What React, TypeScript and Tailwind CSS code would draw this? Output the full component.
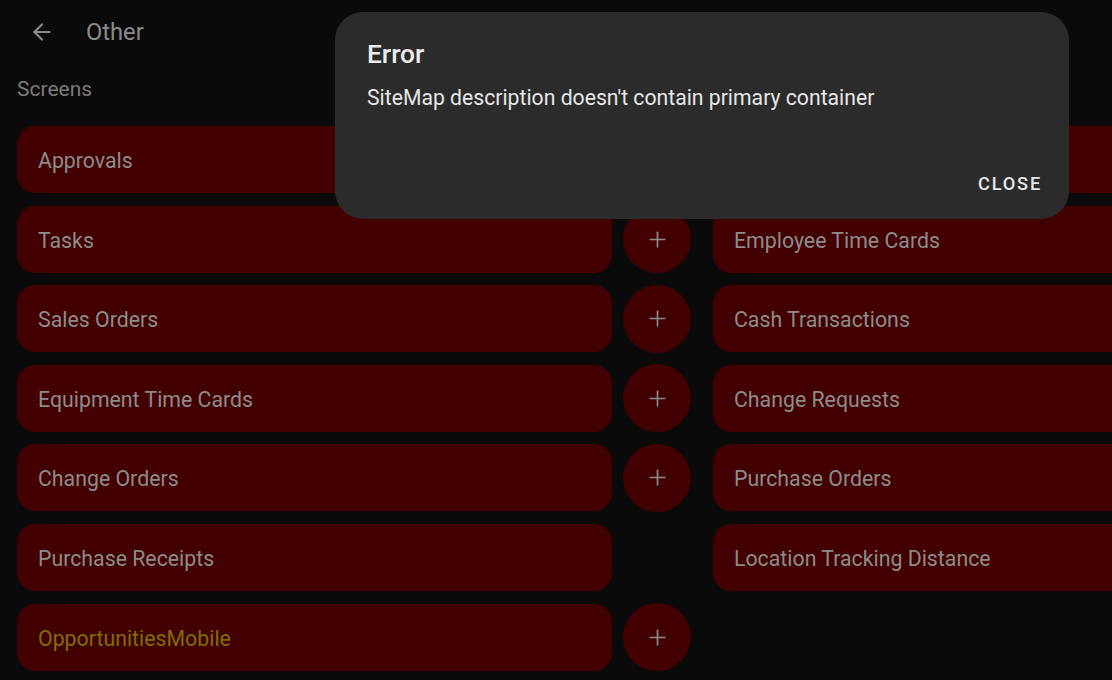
import React from "react";
import { ArrowLeft, Plus } from "lucide-react";

type Row = { left: string; plus: boolean; right?: string; highlight?: boolean };

const rows: Row[] = [
  { left: "Approvals", plus: false, right: "" },
  { left: "Tasks", plus: true, right: "Employee Time Cards" },
  { left: "Sales Orders", plus: true, right: "Cash Transactions" },
  { left: "Equipment Time Cards", plus: true, right: "Change Requests" },
  { left: "Change Orders", plus: true, right: "Purchase Orders" },
  { left: "Purchase Receipts", plus: false, right: "Location Tracking Distance" },
  { left: "OpportunitiesMobile", plus: true, highlight: true },
];

export default function App() {
  return (
    <div
      className="relative w-[1112px] h-[680px] overflow-hidden bg-[#0a0a0a]"
      style={{ fontFamily: "Roboto, 'Noto Sans', sans-serif" }}
    >
      {/* header */}
      <div className="flex items-center h-[64px] pl-[29px]">
        <ArrowLeft size={26} strokeWidth={2} className="text-[#8a8a8a]" />
        <span className="ml-[31px] pt-[2px] text-[23.7px] text-[#8a8a8a]">Other</span>
      </div>
      <div className="pl-[17px] h-[50px] text-[21px] text-[#7c7c7c] leading-none pt-[15px]">Screens</div>

      {/* list */}
      <div className="flex flex-col gap-[12.6px] pl-[17px] pt-[12px]">
        {rows.map((r, i) => (
          <div key={i} className="flex items-center h-[67px] shrink-0">
            <div className="w-[595px] h-full rounded-[18px] bg-[#420000] flex items-center pl-[21px] pt-[3px] shrink-0">
              <span className={`text-[21.3px] ${r.highlight ? "text-[#7d6e06]" : "text-[#8c8c8c]"}`}>{r.left}</span>
            </div>
            <div className="w-[68px] ml-[11px] h-full shrink-0 flex items-center justify-center">
              {r.plus && (
                <div className="w-[68px] h-[68px] rounded-full bg-[#420000] flex items-center justify-center">
                  <Plus size={25} strokeWidth={1.6} className="text-[#8c8c8c]" />
                </div>
              )}
            </div>
            {r.right !== undefined && (
              <div className="w-[595px] ml-[22px] h-full rounded-[18px] bg-[#420000] flex items-center pl-[21px] pt-[3px] shrink-0">
                <span className="text-[21.3px] text-[#8c8c8c]">{r.right}</span>
              </div>
            )}
          </div>
        ))}
      </div>

      {/* dialog */}
      <div className="absolute left-[335px] top-[12px] w-[734px] h-[207px] rounded-[28px] bg-[#2b2b2b] flex flex-col">
        <div className="pl-[32px] pt-[27px] text-[26.3px] font-medium text-[#ececec] leading-[30px]">Error</div>
        <div className="pl-[32px] pt-[16px] text-[21.2px] text-[#e6e6e6] leading-[26px]">
          SiteMap description doesn't contain primary container
        </div>
        <div className="mt-auto flex justify-end pr-[27px] pb-[22px]">
          <span className="text-[18.2px] font-medium tracking-[1.8px] text-[#e6e6e6]">CLOSE</span>
        </div>
      </div>
    </div>
  );
}
